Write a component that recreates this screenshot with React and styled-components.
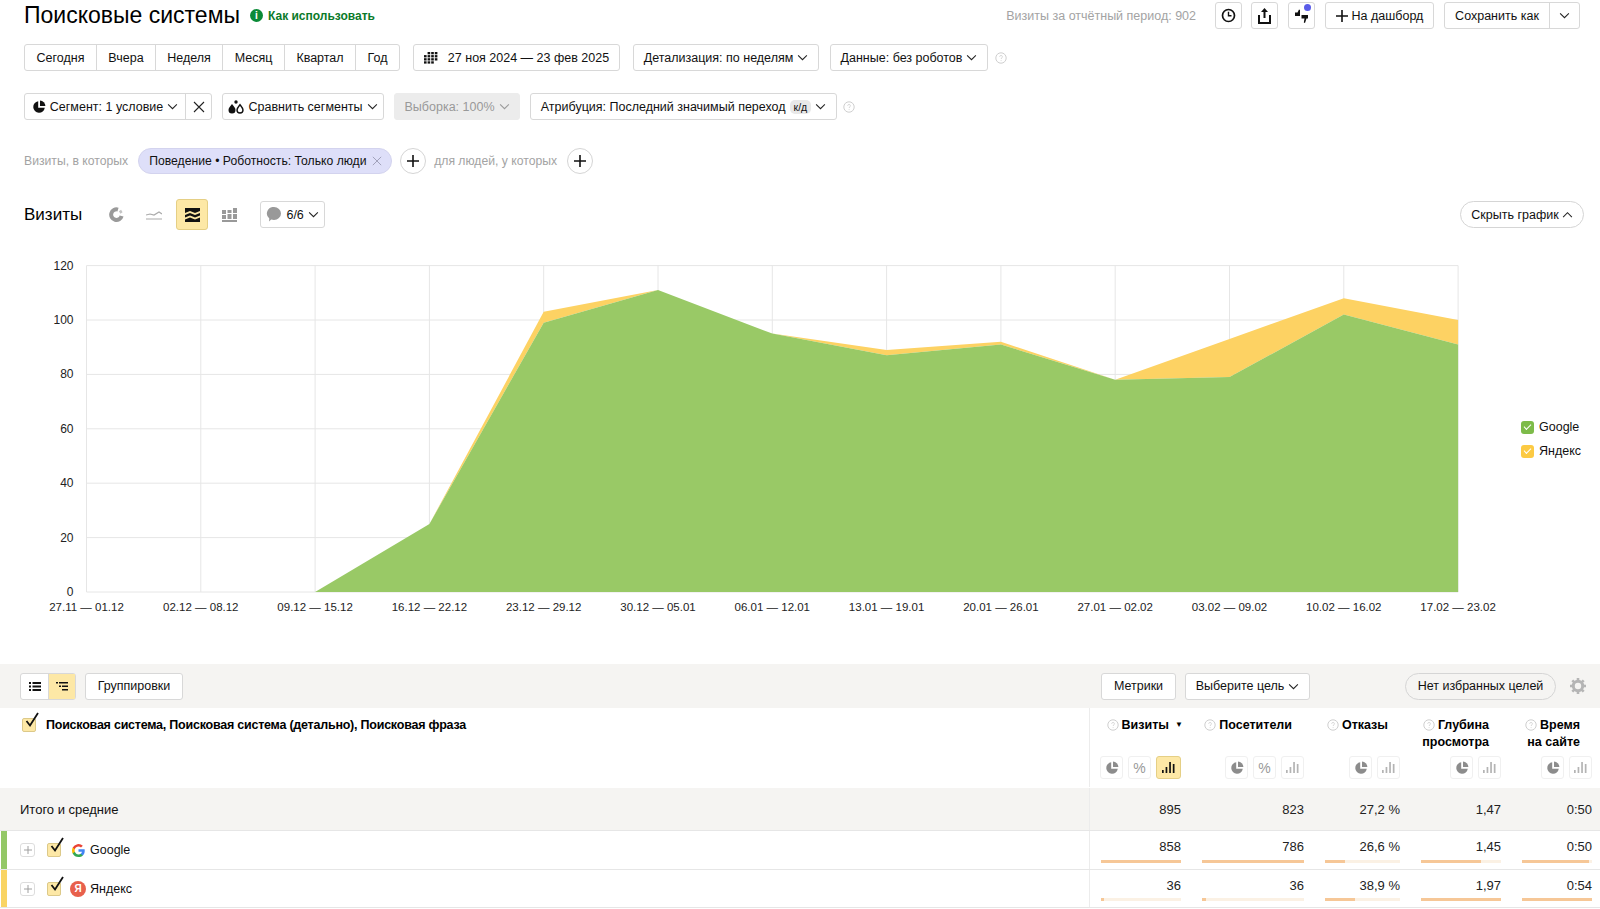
import styled, { createGlobalStyle } from "styled-components";
import { Fragment } from "react";

const GlobalStyle = createGlobalStyle`
  html, body { margin: 0; padding: 0; background: #fff; }
  body {
    font-family: "Liberation Sans", Arial, sans-serif;
    font-size: 13px;
    color: #111;
    overflow: hidden;
  }
`;

// chart data, one point per week
const WEEKS = [
  "27.11 — 01.12", "02.12 — 08.12", "09.12 — 15.12", "16.12 — 22.12", "23.12 — 29.12",
  "30.12 — 05.01", "06.01 — 12.01", "13.01 — 19.01", "20.01 — 26.01", "27.01 — 02.02",
  "03.02 — 09.02", "10.02 — 16.02", "17.02 — 23.02",
];
const GOOGLE = [0, 0, 0, 25, 99, 111, 95, 87, 91, 78, 79, 102, 91];
const TOTAL = [0, 0, 0, 25, 103, 111, 95, 89, 92, 78, 93, 108, 100];
const X0 = 86.5;
const STEP = 114.3;
const Y0 = 352;
const UNIT = 2.72;
const px = (i) => X0 + i * STEP;
const py = (v) => Y0 - v * UNIT;

const COLUMNS = [
  { name: ["Визиты"], total: "895", sorted: true, percent: true, active: true },
  { name: ["Посетители"], total: "823", percent: true },
  { name: ["Отказы"], total: "27,2 %" },
  { name: ["Глубина", "просмотра"], total: "1,47" },
  { name: ["Время", "на сайте"], total: "0:50" },
];
const ROWS = [
  { name: "Google", color: "#93c766", icon: <GoogleIcon />, cells: [["858", 100], ["786", 100], ["26,6 %", 27], ["1,45", 75], ["0:50", 95]] },
  { name: "Яндекс", color: "#f9d463", icon: <YandexIcon />, cells: [["36", 4], ["36", 4], ["38,9 %", 40], ["1,97", 100], ["0:54", 100]] },
];

function Chevron({ up }) {
  return (
    <svg width="11" height="7" viewBox="0 0 12 8" fill="none" stroke="#222" strokeWidth="1.2">
      <path d={up ? "M1 7l5-5 5 5" : "M1 1.5l5 5 5-5"} />
    </svg>
  );
}

function Help() {
  return (
    <svg width="12" height="12" viewBox="0 0 12 12" fill="none" stroke="#cfcfcf">
      <circle cx="6" cy="6" r="5.2" />
      <path d="M4.6 4.8c0-1.8 2.9-1.8 2.9 0 0 1-1.4 1-1.4 2.2M6.1 8.2v.9" strokeWidth=".8" />
    </svg>
  );
}

function Pie({ color = "#111", size = 14 }) {
  return (
    <svg width={size} height={size} viewBox="0 0 14 14" fill={color}>
      <path d="M6.2 1.2a5.8 5.8 0 1 0 6.6 6.6H6.2z" />
      <path d="M8 0.6V6h5.4A5.6 5.6 0 0 0 8 .6z" />
    </svg>
  );
}

function DonutPie() {
  return (
    <svg width="15" height="15" viewBox="0 0 15 15" fill="none" stroke="#9a9a9a" strokeWidth="4">
      <path d="M9 2.600a5.300 5.300 0 1 0 3.600 6.400" />
      <path d="M11 3.500l1.500 2.500" strokeWidth="2.500" stroke="#c4c4c4" />
    </svg>
  );
}

function Bars({ color }) {
  return (
    <svg width="13" height="11" viewBox="0 0 13 11" fill={color}>
      <rect x="0" y="8" width="1.700" height="3" />
      <rect x="3.600" y="5" width="1.700" height="6" />
      <rect x="7.200" y="0" width="1.700" height="11" />
      <rect x="10.800" y="2" width="1.700" height="9" />
    </svg>
  );
}

function Plus({ size = 12, color = "#111", width = 1.6 }) {
  return (
    <svg width={size} height={size} viewBox="0 0 12 12" stroke={color} strokeWidth={width}>
      <path d="M6 0v12M0 6h12" />
    </svg>
  );
}

function Cross({ size = 12, color = "#222" }) {
  return (
    <svg width={size} height={size} viewBox="0 0 12 12" stroke={color} strokeWidth="1.1">
      <path d="M1 1l10 10M11 1L1 11" />
    </svg>
  );
}

function Drops() {
  return (
    <svg width="16" height="14" viewBox="0 0 16 14">
      <path d="M4 4c2 2.500 3.500 4 3.500 6a3.500 3.500 0 0 1-7 0C.5 8 2 6.500 4 4z" fill="#111" />
      <path d="M12 4.700c1.800 2.200 3 3.500 3 5.300a3 3 0 0 1-6 0c0-1.800 1.200-3.100 3-5.300z" fill="#fff" stroke="#111" strokeWidth="1.400" />
      <circle cx="8" cy="2" r="1.700" fill="#111" />
    </svg>
  );
}

function Calendar() {
  return (
    <svg width="14" height="12" viewBox="0 0 14 12" fill="#111">
      {[0, 1, 2, 3].flatMap((r) =>
        [0, 1, 2, 3].map((c) =>
          r === 3 && c === 3 || r === 0 && c === 0 ? null : <rect key={r + "-" + c} x={c * 3.6} y={r * 3.100} width="2.600" height="2.300" />
        )
      )}
    </svg>
  );
}

function Check() {
  return (
    <svg width="16" height="18" viewBox="0 0 16 18" fill="none" stroke="#111" strokeWidth="1.800">
      <path d="M3.500 9l3.500 4.500L15 1" />
    </svg>
  );
}

function GoogleIcon() {
  return (
    <svg width="13" height="13" viewBox="0 0 24 24">
      <path fill="#4285F4" d="M23.500 12.300c0-.9-.1-1.700-.2-2.500H12v4.700h6.500a5.500 5.500 0 0 1-2.400 3.600v3h3.900c2.300-2.100 3.500-5.200 3.500-8.800z" />
      <path fill="#34A853" d="M12 24c3.200 0 6-1.100 8-2.900l-3.900-3c-1.100.7-2.500 1.200-4.100 1.200-3.100 0-5.800-2.100-6.700-5H1.300v3.100A12 12 0 0 0 12 24z" />
      <path fill="#FBBC05" d="M5.300 14.300a7.200 7.200 0 0 1 0-4.600V6.600h-4a12 12 0 0 0 0 10.800l4-3.100z" />
      <path fill="#EA4335" d="M12 4.800c1.800 0 3.300.6 4.600 1.800l3.400-3.400A12 12 0 0 0 1.300 6.600l4 3.100c.9-2.800 3.600-4.900 6.700-4.900z" />
    </svg>
  );
}

function YandexIcon() {
  return <YaBadge>Я</YaBadge>;
}

function App() {
  const greenPts = GOOGLE.map((v, i) => `${px(i)},${py(v)}`).slice(2).join(" ");
  const totalPts = TOTAL.map((v, i) => `${px(i)},${py(v)}`).slice(2).join(" ");
  const greenBack = GOOGLE.map((v, i) => `${px(i)},${py(v)}`).slice(2).reverse().join(" ");

  return (
    <Page>
      <GlobalStyle />
      <TopBar>
        <Title>Поисковые системы</Title>
        <HowTo>
          <InfoDot>i</InfoDot>
          Как использовать
        </HowTo>
        <TopRight>
          <Muted $size={12.5}>Визиты за отчётный период: 902</Muted>
          <Button $w={27} $ml={19}>
            <svg width="15" height="15" viewBox="0 0 15 15" fill="none" stroke="#111" strokeWidth="1.700">
              <circle cx="7.500" cy="7.500" r="6" />
              <path d="M7.500 3.800v4h3" strokeWidth="1.400" />
            </svg>
          </Button>
          <Button $w={27} $ml={9}>
            <svg width="13" height="16" viewBox="0 0 13 16" fill="#111">
              <path d="M6.500 0L10 4H7.500v6h-2V4H3z" />
              <path d="M0 7h2v7h9V7h2v9H0z" />
            </svg>
          </Button>
          <Button $w={27} $ml={10}>
            <svg width="16" height="16" viewBox="0 0 16 16" fill="#111">
              <path d="M1 4.500h2.500L5 1.500l1 .4V8H1z" />
              <path d="M7.500 7H14v3.500h-1.500L11 15l-1.200-.4.7-4.100h-3z" />
            </svg>
            <Notice />
          </Button>
          <Button $w={109} $ml={10}>
            <Plus />
            На дашборд
          </Button>
          <Joined $ml={10}>
            <Segment $w={104}>Сохранить как</Segment>
            <Segment $w={30}><Chevron /></Segment>
          </Joined>
        </TopRight>
      </TopBar>

      <FilterRow $top={14}>
        <Joined>
          <Segment $w={71}>Сегодня</Segment>
          <Segment $w={59}>Вчера</Segment>
          <Segment $w={67}>Неделя</Segment>
          <Segment $w={62}>Месяц</Segment>
          <Segment $w={71}>Квартал</Segment>
          <Segment $w={44}>Год</Segment>
        </Joined>
        <Button $w={207} $ml={13}>
          <Calendar />
          <DateText>27 ноя 2024 — 23 фев 2025</DateText>
        </Button>
        <Button $w={186} $ml={13}>Детализация: по неделям <Chevron /></Button>
        <Button $w={158} $ml={11}>Данные: без роботов <Chevron /></Button>
        <HelpWrap $ml={7}><Help /></HelpWrap>
      </FilterRow>

      <FilterRow $top={22}>
        <Joined>
          <Segment $w={160}>
            <Pie />
            Сегмент: 1 условие <Chevron />
          </Segment>
          <Segment $w={26}><Cross /></Segment>
        </Joined>
        <Button $w={162} $ml={10}>
          <Drops />
          Сравнить сегменты <Chevron />
        </Button>
        <Button $w={126} $ml={10} $disabled>Выборка: 100% <Chevron /></Button>
        <Button $w={307} $ml={10}>
          Атрибуция: Последний значимый переход <Kbd>к/д</Kbd>
          <Chevron />
        </Button>
        <HelpWrap $ml={6}><Help /></HelpWrap>
      </FilterRow>

      <ConditionRow>
        <Muted>Визиты, в которых</Muted>
        <Pill>
          Поведение • Роботность: Только люди
          <Cross size={10} color="#9b9bb5" />
        </Pill>
        <RoundAdd $ml={8}><Plus /></RoundAdd>
        <Muted>для людей, у которых</Muted>
        <RoundAdd $ml={10}><Plus /></RoundAdd>
      </ConditionRow>

      <ChartHead>
        <ChartTitle>Визиты</ChartTitle>
        <ChartIcon $ml={18}><DonutPie /></ChartIcon>
        <ChartIcon $ml={6}>
          <svg width="16" height="10" viewBox="0 0 16 10" fill="none" stroke="#aaa" strokeWidth="1.200">
            <path d="M0 5l4-1 4 1 5-3 3 2M0 9h16" />
          </svg>
        </ChartIcon>
        <ChartIcon $ml={6} $active>
          <svg width="15" height="14" viewBox="0 0 15 14" fill="#111">
            <path d="M0 0h15v3L10 5 5 3 0 5z" />
            <path d="M0 7l5-2 5 2 5-2v2.500l-5 2-5-2-5 2z" />
            <path d="M0 11.500l5-2 5 2 5-2V14H0z" />
          </svg>
        </ChartIcon>
        <ChartIcon $ml={5}>
          <svg width="15" height="14" viewBox="0 0 15 14" fill="#999">
            <rect x="0" y="2" width="4" height="4" />
            <rect x="0" y="7" width="4" height="4" />
            <rect x="5.500" y="2" width="4" height="3" />
            <rect x="5.500" y="6" width="4" height="5" />
            <rect x="11" y="0" width="4" height="5" />
            <rect x="11" y="6" width="4" height="5" />
            <rect x="0" y="12" width="15" height="2" />
          </svg>
        </ChartIcon>
        <Button $w={65} $ml={15} $h={27}>
          <svg width="16" height="15" viewBox="0 0 16 15" fill="#999">
            <path d="M8 0a7 6.500 0 0 1 0 13c-1 0-2-.2-2.800-.5L3 14.500l.3-3A6.500 6.500 0 0 1 8 0z" />
          </svg>
          6/6 <Chevron />
        </Button>
        <HideChart>Скрыть график <Chevron up /></HideChart>
      </ChartHead>

      <ChartArea>
        <svg width="1500" height="424" viewBox="0 0 1500 424">
          {[0, 20, 40, 60, 80, 100, 120].map((v) => (
            <Fragment key={v}>
              <line x1={X0} x2={X0 + 12 * STEP} y1={py(v)} y2={py(v)} stroke="#e6e6e6" />
              <text x={X0 - 13} y={py(v) + 4} fontSize="12" textAnchor="end" fill="#222" fontFamily="Liberation Sans">{v}</text>
            </Fragment>
          ))}
          {WEEKS.map((w, i) => (
            <Fragment key={w}>
              <line x1={px(i)} x2={px(i)} y1={py(120)} y2={py(0)} stroke="#e6e6e6" />
              <text x={px(i)} y={Y0 + 19} fontSize="11.500" textAnchor="middle" fill="#222" fontFamily="Liberation Sans">{w}</text>
            </Fragment>
          ))}
          <polygon points={`${totalPts} ${greenBack}`} fill="#fdd263" />
          <polygon points={`${greenPts} ${px(12)},${Y0} ${px(2)},${Y0}`} fill="#99c966" />
        </svg>
        <Legend>
          <LegendItem>
            <LegendBox $color="#7dbb49"><LegendTick /></LegendBox>
            Google
          </LegendItem>
          <LegendItem>
            <LegendBox $color="#fcca43"><LegendTick /></LegendBox>
            Яндекс
          </LegendItem>
        </Legend>
      </ChartArea>

      <Toolbar>
        <ToolbarLeft>
          <Joined>
            <Segment $w={27}>
              <svg width="12" height="9" viewBox="0 0 12 9" fill="#111">
                <path d="M0 0h2v2H0zM3.500 0H12v2H3.500zM0 3.500h2v2H0zM3.500 3.500H12v2H3.500zM0 7h2v2H0zM3.500 7H12v2H3.500z" />
              </svg>
            </Segment>
            <Segment $w={27} $active>
              <svg width="12" height="9" viewBox="0 0 12 9" fill="#111">
                <path d="M0 0h2v1.500H0zM3 0h9v1.500H3zM3 3.500h2v1.500H3zM6 3.500h6v1.500H6zM6 7h6v1.500H6z" />
              </svg>
            </Segment>
          </Joined>
          <Button $w={98} $ml={9}>Группировки</Button>
        </ToolbarLeft>
        <ToolbarRight>
          <Button $w={75}>Метрики</Button>
          <Button $w={125} $ml={9}>Выберите цель <Chevron /></Button>
          <GoalsPill>Нет избранных целей</GoalsPill>
          <GearWrap>
            <svg width="16" height="16" viewBox="0 0 16 16">
              <circle cx="8" cy="8" r="4.700" fill="none" stroke="#b5b5b5" strokeWidth="3" />
              <path d="M8 0v3M8 13v3M0 8h3M13 8h3M2.300 2.300l2 2M11.700 11.700l2 2M13.700 2.300l-2 2M4.300 11.700l-2 2" stroke="#b5b5b5" strokeWidth="2.600" />
            </svg>
          </GearWrap>
        </ToolbarRight>
      </Toolbar>

      <TableRow $h={80}>
        <HeadName>
          <CheckBox $ml={22}><Check /></CheckBox>
          <HeadTitle>Поисковая система, Поисковая система (детально), Поисковая фраза</HeadTitle>
        </HeadName>
        {COLUMNS.map((c) => (
          <HeadCell key={c.name[0]}>
            <HeadText>
              {c.name.map((line, i) => (
                <HeadLine key={line}>
                  {i === 0 && <Help />}
                  {line}
                  {c.sorted && <SortMark>▼</SortMark>}
                </HeadLine>
              ))}
            </HeadText>
            <ModeRow>
              <ModeBtn><Pie color="#8c8c8c" size={14} /></ModeBtn>
              {c.percent && <ModeBtn $text>%</ModeBtn>}
              <ModeBtn $active={c.active}><Bars color={c.active ? "#111" : "#b4b4b4"} /></ModeBtn>
            </ModeRow>
          </HeadCell>
        ))}
      </TableRow>

      <TableRow $h={43} $total>
        <TotalName>Итого и средние</TotalName>
        {COLUMNS.map((c) => (
          <ValueCell key={c.name[0]}>{c.total}</ValueCell>
        ))}
      </TableRow>

      {ROWS.map((r) => (
        <TableRow key={r.name} $h={38.500} $line>
          <RowName $color={r.color}>
            <Expand><Plus size={8} color="#999" width={1.400} /></Expand>
            <CheckBox $ml={12}><Check /></CheckBox>
            <RowIcon>{r.icon}</RowIcon>
            {r.name}
          </RowName>
          {r.cells.map(([value, share], i) => (
            <ValueCell key={i} $bar>
              {value}
              <BarTrack>
                <BarFill style={{ width: share + "%" }} />
              </BarTrack>
            </ValueCell>
          ))}
        </TableRow>
      ))}
    </Page>
  );
}

export default App;

const Page = styled.div`
  width: 1600px;
  height: 909px;
  display: flex;
  flex-direction: column;
  overflow: hidden;
`;

const TopBar = styled.div`
  height: 29px;
  display: flex;
  align-items: center;
  padding: 1px 20px 0 24px;
`;

const Title = styled.h1`
  margin: 0;
  font-size: 23px;
  font-weight: 400;
  color: #000;
`;

const HowTo = styled.a`
  display: flex;
  align-items: center;
  gap: 5px;
  margin-left: 10px;
  color: #0b7a2a;
  font-size: 12px;
  font-weight: 700;
`;

const InfoDot = styled.span`
  width: 13px;
  height: 13px;
  border-radius: 50%;
  background: #0a8a37;
  color: #fff;
  font-size: 10px;
  font-weight: 700;
  text-align: center;
  line-height: 13px;
`;

const TopRight = styled.div`
  margin-left: auto;
  display: flex;
  align-items: center;
`;

const Muted = styled.span`
  color: #a3a3a3;
  font-size: ${(p) => p.$size || 12.2}px;
  white-space: nowrap;
`;

const Button = styled.button`
  position: relative;
  flex: none;
  box-sizing: border-box;
  width: ${(p) => p.$w}px;
  height: ${(p) => p.$h || 27}px;
  margin-left: ${(p) => p.$ml || 0}px;
  padding: 0;
  display: flex;
  align-items: center;
  justify-content: center;
  gap: 4px;
  border: 1px solid ${(p) => (p.$disabled ? "#ececec" : "#d8d8d8")};
  border-radius: 3px;
  background: ${(p) => (p.$disabled ? "#ececec" : "#fff")};
  color: ${(p) => (p.$disabled ? "#999" : "#111")};
  font: inherit;
  font-size: 12.500px;
  white-space: nowrap;
  ${(p) => p.$disabled && "svg { opacity: .4; }"}
`;

const Notice = styled.span`
  position: absolute;
  top: 1px;
  right: 3px;
  width: 7px;
  height: 7px;
  border-radius: 50%;
  background: #5a5ce8;
`;

const Joined = styled.div`
  flex: none;
  display: flex;
  height: 27px;
  margin-left: ${(p) => p.$ml || 0}px;
  box-sizing: border-box;
  border: 1px solid #d8d8d8;
  border-radius: 3px;
  background: #fff;
`;

const Segment = styled.div`
  box-sizing: border-box;
  width: ${(p) => p.$w}px;
  display: flex;
  align-items: center;
  justify-content: center;
  gap: 4px;
  font-size: 12.500px;
  white-space: nowrap;
  background: ${(p) => (p.$active ? "#fde8a6" : "transparent")};
  & + & {
    border-left: 1px solid #d8d8d8;
  }
`;

const FilterRow = styled.div`
  display: flex;
  align-items: center;
  height: 27px;
  margin-top: ${(p) => p.$top}px;
  padding-left: 24px;
`;

const DateText = styled.span`
  margin-left: 6px;
`;

const HelpWrap = styled.span`
  display: flex;
  margin-left: ${(p) => p.$ml}px;
`;

const Kbd = styled.span`
  padding: 1px 4px;
  border-radius: 5px;
  background: #e8e8e8;
  font-size: 10.500px;
`;

const ConditionRow = styled.div`
  display: flex;
  align-items: center;
  height: 26px;
  margin-top: 28px;
  padding-left: 24px;
`;

const Pill = styled.div`
  box-sizing: border-box;
  width: 254px;
  height: 26px;
  margin-left: 10px;
  display: flex;
  align-items: center;
  justify-content: space-between;
  padding: 0 9px 0 10px;
  border: 1px solid #d3d3ee;
  border-radius: 13px;
  background: #dedff9;
  font-size: 12.200px;
  white-space: nowrap;
`;

const RoundAdd = styled.div`
  box-sizing: border-box;
  width: 26px;
  height: 26px;
  margin: 0 8px 0 ${(p) => p.$ml}px;
  display: flex;
  align-items: center;
  justify-content: center;
  border: 1px solid #d5d5d5;
  border-radius: 50%;
`;

const ChartHead = styled.div`
  display: flex;
  align-items: center;
  height: 31px;
  margin-top: 25px;
  padding: 0 16px 0 24px;
`;

const ChartTitle = styled.h2`
  margin: 0;
  font-size: 17px;
  font-weight: 400;
  color: #000;
`;

const ChartIcon = styled.div`
  box-sizing: border-box;
  width: 32px;
  height: 31px;
  margin-left: ${(p) => p.$ml}px;
  display: flex;
  align-items: center;
  justify-content: center;
  border-radius: 3px;
  ${(p) => p.$active && "background: #fde8a6; border: 1px solid #e5cf85;"}
`;

const HideChart = styled.div`
  box-sizing: border-box;
  width: 124px;
  height: 27px;
  margin-left: auto;
  display: flex;
  align-items: center;
  justify-content: center;
  gap: 3px;
  border: 1px solid #d5d5d5;
  border-radius: 14px;
  font-size: 12.500px;
`;

const ChartArea = styled.div`
  display: flex;
  height: 424px;
  margin-top: 10px;
`;

const Legend = styled.div`
  display: flex;
  flex-direction: column;
  gap: 8px;
  padding: 179px 0 0 21px;
`;

const LegendItem = styled.div`
  display: flex;
  align-items: center;
  gap: 5px;
  height: 16px;
  font-size: 12.500px;
`;

const LegendBox = styled.span`
  width: 13px;
  height: 13px;
  border-radius: 3px;
  background: ${(p) => p.$color};
  display: flex;
  align-items: center;
  justify-content: center;
`;

const LegendTick = styled.span`
  width: 6px;
  height: 3px;
  margin-top: -2px;
  border-left: 1.500px solid #fff;
  border-bottom: 1.500px solid #fff;
  transform: rotate(-45deg);
`;

const Toolbar = styled.div`
  flex: none;
  height: 44px;
  display: flex;
  align-items: center;
  background: #f5f4f2;
`;

const ToolbarLeft = styled.div`
  width: 1089px;
  display: flex;
  align-items: center;
  padding-left: 20px;
  box-sizing: border-box;
`;

const ToolbarRight = styled.div`
  flex: 1;
  display: flex;
  align-items: center;
  padding-left: 12px;
`;

const GoalsPill = styled.div`
  box-sizing: border-box;
  width: 151px;
  height: 27px;
  margin-left: auto;
  display: flex;
  align-items: center;
  justify-content: center;
  border: 1px solid #d5d5d5;
  border-radius: 14px;
  font-size: 12.500px;
`;

const GearWrap = styled.div`
  display: flex;
  margin: 0 14px 0 14px;
`;

const TableRow = styled.div`
  flex: none;
  box-sizing: border-box;
  display: grid;
  grid-template-columns: 1089px 102px 123px 96px 101px 89px;
  height: ${(p) => p.$h}px;
  background: ${(p) => (p.$total ? "#f5f4f2" : "#fff")};
  border-bottom: 1px solid ${(p) => (p.$line || p.$total ? "#e6e6e6" : "transparent")};
  & > *:nth-child(2) {
    border-left: 1px solid #ececec;
  }
`;

const HeadName = styled.div`
  display: flex;
  align-items: flex-start;
  padding-top: 10px;
`;

const CheckBox = styled.span`
  position: relative;
  flex: none;
  width: 14px;
  height: 14px;
  margin-left: ${(p) => p.$ml}px;
  box-sizing: border-box;
  border: 1px solid #dcc989;
  border-radius: 2px;
  background: #fde8a6;
  & svg {
    position: absolute;
    left: 0;
    top: -7px;
  }
`;

const HeadTitle = styled.span`
  margin-left: 10px;
  font-size: 12.500px;
  font-weight: 700;
  color: #000;
  letter-spacing: -0.23px;
`;

const HeadCell = styled.div`
  display: flex;
  flex-direction: column;
  align-items: flex-end;
  padding: 8px 10px 0 0;
  min-height: 0;
  &:last-child {
    padding-right: 8px;
  }
`;

const HeadText = styled.div`
  height: 40px;
  padding-right: 12px;
  display: flex;
  flex-direction: column;
  align-items: flex-end;
`;

const HeadLine = styled.div`
  position: relative;
  display: flex;
  align-items: center;
  gap: 3px;
  height: 17px;
  font-size: 12.500px;
  font-weight: 700;
  color: #000;
  white-space: nowrap;
`;

const SortMark = styled.span`
  position: absolute;
  right: -14px;
  font-size: 8px;
`;

const ModeRow = styled.div`
  display: flex;
  gap: 5px;
`;

const ModeBtn = styled.div`
  box-sizing: border-box;
  width: ${(p) => (p.$active ? 25 : 23)}px;
  height: 23px;
  display: flex;
  align-items: center;
  justify-content: center;
  border: 1px solid ${(p) => (p.$active ? "#e5cf85" : "#f0f0f0")};
  border-radius: 3px;
  background: ${(p) => (p.$active ? "#fde8a6" : "#fff")};
  color: #999;
  font-size: 14px;
`;

const TotalName = styled.div`
  display: flex;
  align-items: center;
  padding-left: 20px;
  font-size: 13px;
`;

const ValueCell = styled.div`
  position: relative;
  display: flex;
  justify-content: flex-end;
  align-items: ${(p) => (p.$bar ? "flex-start" : "center")};
  padding: ${(p) => (p.$bar ? "8px" : "0")} 10px 0 0;
  font-size: 13px;
  color: #222;
  &:last-child {
    padding-right: 8px;
  }
`;

const BarTrack = styled.div`
  position: absolute;
  left: 11px;
  right: 10px;
  bottom: 6px;
  height: 3px;
  background: #fbf1e4;
  ${ValueCell}:last-child > & {
    right: 8px;
  }
`;

const BarFill = styled.div`
  height: 100%;
  background: #f6c797;
`;

const RowName = styled.div`
  display: flex;
  align-items: center;
  margin-left: 1px;
  padding: 1px 0 0 19px;
  border-left: 6px solid ${(p) => p.$color};
  font-size: 12.500px;
  box-sizing: border-box;
`;

const Expand = styled.span`
  box-sizing: border-box;
  width: 15px;
  height: 14px;
  margin-left: -6px;
  display: flex;
  align-items: center;
  justify-content: center;
  border: 1px solid #ddd;
  border-radius: 3px;
`;

const RowIcon = styled.span`
  display: flex;
  justify-content: center;
  width: 18px;
  margin: 0 3px 0 8px;
`;

const YaBadge = styled.span`
  width: 16px;
  height: 16px;
  border-radius: 50%;
  background: #e8604c;
  color: #fff;
  font-size: 10px;
  font-weight: 700;
  line-height: 16px;
  text-align: center;
`;
